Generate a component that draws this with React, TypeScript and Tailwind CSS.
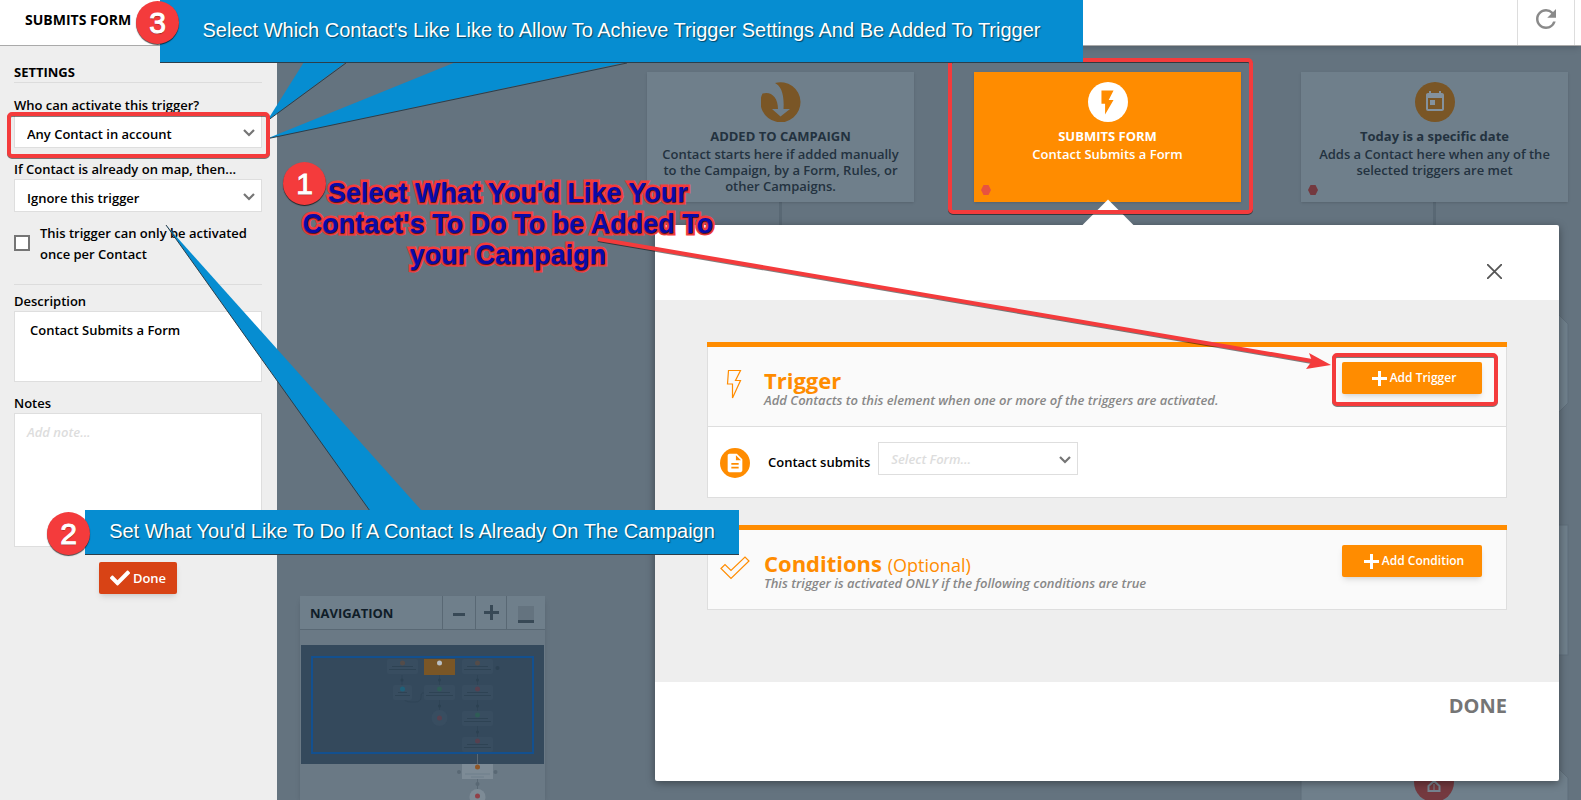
import React from "react";
import { MdRefresh, MdFlashOn, MdToday, MdDescription } from "react-icons/md";
import { FaCheck } from "react-icons/fa";

const Chevron = ({ className }: { className: string }) => (
  <svg viewBox="0 0 12 8" className={`pointer-events-none absolute h-2 w-3 ${className}`}>
    <path d="M1 1 L6 6 L11 1" fill="none" stroke="#757575" strokeWidth="2.2" />
  </svg>
);

const Plus = () => (
  <svg viewBox="0 0 15 15" className="h-[15px] w-[15px]">
    <path d="M6 0h3v6h6v3H9v6H6V9H0V6h6z" fill="#fff" />
  </svg>
);

function Sidebar() {
  return (
    <aside className="relative z-10 w-[277px] shrink-0 bg-[#eeeeee] pt-[17px] pr-[15px] pl-[14px] text-[13px] leading-[18px] font-semibold">
      <h2 className="border-b border-[#dcdcdc] pb-px font-bold">SETTINGS</h2>

      <label htmlFor="who" className="mt-[13px] mb-px block">Who can activate this trigger?</label>
      <div className="relative">
        <select id="who" className="block h-[33px] w-full appearance-none border border-[#dedede] bg-white pt-1 pl-3 font-semibold">
          <option>Any Contact in account</option>
        </select>
        <Chevron className="top-[14px] right-[7px]" />
      </div>

      <label htmlFor="already" className="mt-3 mb-px block">If Contact is already on map, then...</label>
      <div className="relative">
        <select id="already" className="block h-[33px] w-full appearance-none border border-[#dedede] bg-white pt-1 pl-3 font-semibold">
          <option>Ignore this trigger</option>
        </select>
        <Chevron className="top-[14px] right-[7px]" />
      </div>

      <div className="mt-[11px] flex items-center gap-[10px]">
        <input id="once" type="checkbox" className="mb-[2px] h-4 w-4 shrink-0 appearance-none border-2 border-[#757575] bg-white" />
        <label htmlFor="once" className="leading-[21px]">This trigger can only be activated once per Contact</label>
      </div>

      <hr className="mt-[19px] border-[#dcdcdc]" />

      <label htmlFor="description" className="mt-[7px] mb-px block">Description</label>
      <textarea
        id="description"
        defaultValue="Contact Submits a Form"
        className="block h-[71px] w-full resize-none border border-[#dedede] bg-white px-[15px] py-[9px] font-semibold"
      />

      <label htmlFor="notes" className="mt-3 mb-px block">Notes</label>
      <textarea
        id="notes"
        placeholder="Add note..."
        className="block h-[134px] w-full resize-none border border-[#dedede] bg-white px-3 py-[9px] font-semibold placeholder:text-[#dddddd] placeholder:italic"
      />

      <button className="mx-auto mt-[15px] flex h-8 w-[78px] items-center justify-center gap-[3px] rounded-xs bg-[#d84315] text-white shadow-md">
        <FaCheck className="h-5 w-5" />
        Done
      </button>
    </aside>
  );
}

function AddedIcon() {
  return (
    <svg viewBox="0 0 40 40" className="h-10 w-10">
      <path d="M14 1 A20 20 0 1 1 1.500 11.500 C10 9 17 15 17 27 H11 L19.500 34.500 L29 27 H22.500 C23.500 12 20 4 14 1 Z" fill="#7a5626" />
    </svg>
  );
}

type NodeProps = { className: string; icon: React.ReactNode; title: string; text: string };

function MapNode({ className, icon, title, text }: NodeProps) {
  return (
    <div className={`absolute top-[26px] flex h-[130px] w-[267px] flex-col items-center px-3 pt-[10px] text-center text-[13px] leading-4 shadow-sm ${className}`}>
      {icon}
      <h3 className="mt-[5px] mb-px leading-[18px] font-bold">{title}</h3>
      <p className="font-semibold">{text}</p>
    </div>
  );
}

function Canvas() {
  return (
    <>
      {/* connectors and nodes further down the map */}
      <svg className="absolute top-0 left-0 h-[754px] w-[1304px]" viewBox="277 46 1304 754">
        <g fill="#596874">
          <rect x="779" y="202" width="3" height="200" />
          <rect x="1433" y="202" width="3" height="600" />
        </g>
        <g fill="#6f7f8b" stroke="#5f6e7a">
          <path d="M1327 298H1542L1568 324V403L1542 429H1327L1301 403V324Z" />
          <rect x="1301" y="525" width="267" height="130" />
          <path d="M1327 752H1542L1568 778V882H1301V778Z" />
        </g>
        <circle cx="1434" cy="782" r="20" fill="#74393f" />
        <path d="M1430 772h8v5l-4 3-4-3zM1434 781l5.500 5v5h-11v-5z" fill="none" stroke="#76838f" strokeWidth="2" />
        <path d="M1434 784v7" stroke="#76838f" />
      </svg>

      <MapNode
        className="left-[370px] bg-[#6f7f8b] text-[#23323f]"
        icon={<AddedIcon />}
        title="ADDED TO CAMPAIGN"
        text="Contact starts here if added manually to the Campaign, by a Form, Rules, or other Campaigns."
      />
      <MapNode
        className="left-[697px] bg-[#ff8c00] text-white"
        icon={
          <span className="flex h-10 w-10 items-center justify-center rounded-full bg-white">
            <MdFlashOn className="h-[29px] w-[29px] text-[#ff8c00]" />
          </span>
        }
        title="SUBMITS FORM"
        text="Contact Submits a Form"
      />
      <MapNode
        className="left-[1024px] bg-[#6f7f8b] text-[#23323f]"
        icon={
          <span className="flex h-10 w-10 items-center justify-center rounded-full bg-[#7a5626]">
            <MdToday className="h-6 w-6 text-[#84929e]" />
          </span>
        }
        title="Today is a specific date"
        text="Adds a Contact here when any of the selected triggers are met"
      />
      <svg className="absolute top-0 left-0 h-[180px] w-[1304px]" viewBox="277 46 1304 180">
        <path d="M983.500 185h5l2.500 5-2.500 5h-5l-2.500-5z" fill="#e8533f" />
        <path d="M1310.500 185h5l2.500 5-2.500 5h-5l-2.500-5z" fill="#74393f" />
      </svg>
    </>
  );
}

const miniNodes = [
  { x: 387, y: 660, w: 31, c: "#544c49" },
  { x: 462, y: 660, w: 31, c: "#544c49" },
  { x: 393, y: 686, w: 19, c: "#1f6079" },
  { x: 424, y: 686, w: 31, c: "#2f5c56" },
  { x: 462, y: 686, w: 31, c: "#56404f" },
  { x: 462, y: 712, w: 31, c: "#2f5c56" },
  { x: 462, y: 738, w: 31, c: "#56404f" },
];

function Navigation() {
  return (
    <section className="absolute top-[550px] left-[23px] w-[245px] bg-[#6a7985] shadow-md">
      <header className="flex h-[34px] border-b border-[#596874] bg-[#6f7f8b]">
        <h2 className="flex-1 pl-[10px] text-[13px] leading-[35px] font-bold text-[#101d28]">NAVIGATION</h2>
        <button aria-label="Zoom out" className="flex w-[33px] items-center justify-center border-l border-[#596874] pt-1">
          <span className="h-[3px] w-3 bg-[#384956]" />
        </button>
        <button aria-label="Zoom in" className="flex w-[31px] items-center justify-center border-l border-[#596874]">
          <svg viewBox="0 0 15 15" className="h-[15px] w-[15px]">
            <path d="M6 0h3v6h6v3H9v6H6V9H0V6h6z" fill="#384956" />
          </svg>
        </button>
        <button aria-label="Minimize" className="flex w-[39px] items-center justify-center border-l border-[#596874] pt-1">
          <span className="h-[17px] w-4 border-b-[3px] border-[#384956] bg-[#64737f]" />
        </button>
      </header>
      <svg viewBox="300 630 245 170" className="block h-[170px] w-[245px]">
        <rect x="301" y="645" width="243" height="119" fill="#34495c" />
        <g stroke="#2f4456">
          <path d="M402 675v11M439.500 675v41M477.500 675v65" />
          <path d="M477.500 754v38" stroke="#596874" />
          <path d="M402 696q2 6 9 6h4q6 0 6-5t3-4" fill="none" />
        </g>
        {miniNodes.map((n) => (
          <g key={`${n.x}-${n.y}`}>
            <rect x={n.x} y={n.y - 1} width={n.w} height="15" rx="2" fill="#384d60" />
            <rect x={n.x + 5} y={n.y + 6} width={n.w - 10} height="1" fill="#2e4354" />
            <rect x={n.x + 2} y={n.y + 9} width={n.w - 4} height="1" fill="#2e4354" />
            <circle cx={n.x + n.w / 2} cy={n.y + 3} r="2.500" fill={n.c} />
          </g>
        ))}
        <g fill="#2c4152">
          <circle cx="402" cy="680" r="1.500" />
          <circle cx="439.500" cy="680" r="1.500" />
          <circle cx="477.500" cy="680" r="1.500" />
          <circle cx="439.500" cy="706" r="1.500" />
          <circle cx="477.500" cy="706" r="1.500" />
          <circle cx="477.500" cy="732" r="1.500" />
          <circle cx="497.500" cy="668" r="2" />
        </g>
        <circle cx="439.500" cy="718" r="8" fill="#384d60" />
        <circle cx="439.500" cy="718" r="2.500" fill="#56404f" />
        <rect x="424" y="659" width="31" height="16" fill="#7a5626" />
        <circle cx="439.500" cy="663" r="2.500" fill="#b9bfc4" />
        <rect x="312" y="657" width="221" height="96" fill="none" stroke="#13508f" strokeWidth="2" />
        <rect x="462" y="764" width="31" height="15" fill="#7d8b96" />
        <path d="M465 774h25M471 777h13" stroke="#6f7f8b" />
        <circle cx="477.500" cy="767" r="2.500" fill="#8f5626" />
        <circle cx="459" cy="772" r="2" fill="#596874" />
        <circle cx="495.500" cy="772" r="2" fill="#596874" />
        <circle cx="477.500" cy="784" r="2" fill="#596874" />
        <circle cx="477.500" cy="797" r="8" fill="#7d8b96" />
        <circle cx="477.500" cy="796" r="2.500" fill="#914048" />
      </svg>
    </section>
  );
}

function TriggerDialog() {
  return (
    <section role="dialog" aria-label="Trigger" className="absolute top-[179px] right-[22px] left-[378px] rounded-xs bg-white shadow-[0_2px_8px_rgba(0,0,0,0.4)]">
      <span className="absolute -top-[18px] left-1/2 -ml-[17px] h-9 w-9 rotate-45 bg-white" />
      <header className="relative flex h-[75px] items-center justify-end pt-[18px] pr-[57px]">
        <button aria-label="Close">
          <svg viewBox="0 0 15 15" className="h-[15px] w-[15px]">
            <path d="M0 0 L15 15 M15 0 L0 15" stroke="#555" strokeWidth="1.800" />
          </svg>
        </button>
      </header>

      <div className="relative flex h-[382px] flex-col gap-[27px] bg-[#eeeeee] px-[52px] pt-[42px]">
        <div className="border-t-[5px] border-[#ff8c00]">
          <div className="flex h-20 border border-t-0 border-[#dedede] bg-[#fafafa]">
            <svg viewBox="0 0 16 30" className="mt-[22px] ml-[18px] h-[30px] w-4">
              <path d="M2.500 1.500H14.500L9.500 11.500H14.500L6.500 29V15H1.500Z" fill="none" stroke="#ff8c00" strokeWidth="1.200" />
            </svg>
            <div className="ml-[22px] flex-1 pt-[21px]">
              <h2 className="text-[22px] leading-6 font-bold text-[#ff8c00]">Trigger</h2>
              <p className="text-[13px] leading-4 font-semibold text-[#888] italic">Add Contacts to this element when one or more of the triggers are activated.</p>
            </div>
            <button className="mt-[15px] mr-6 flex h-8 w-[140px] items-center justify-center gap-[3px] rounded-xs bg-[#ff8c00] pl-1 text-xs font-semibold text-white shadow-md">
              <Plus />
              Add Trigger
            </button>
          </div>
          <div className="flex h-[71px] items-center border border-t-0 border-[#dedede] bg-white pt-[2px] pl-3">
            <span className="flex h-[30px] w-[30px] items-center justify-center rounded-full bg-[#ff8c00]">
              <MdDescription className="h-[22px] w-[22px] text-white" />
            </span>
            <label htmlFor="form" className="ml-[18px] text-[13px] font-semibold">Contact submits</label>
            <div className="relative mb-[10px] ml-2 w-[200px]">
              <select id="form" className="block h-[33px] w-full appearance-none border border-[#dedede] bg-white pt-1 pl-3 text-[13px] font-semibold text-[#dddddd] italic">
                <option>Select Form...</option>
              </select>
              <Chevron className="top-[14px] right-[7px]" />
            </div>
          </div>
        </div>

        <div className="border-t-[5px] border-[#ff8c00]">
          <div className="flex h-20 border border-t-0 border-[#dedede] bg-[#fafafa]">
            <svg viewBox="0 0 30 24" className="mt-[26px] ml-3 h-6 w-[30px]">
              <path d="M1 12.500L5 8.500L11 14.500L25 1L29 5L11 22.500Z" fill="none" stroke="#ff8c00" strokeWidth="1.200" />
            </svg>
            <div className="ml-[14px] flex-1 pt-[21px]">
              <h2 className="text-[22px] leading-6 font-bold text-[#ff8c00]">
                Conditions <span className="text-lg leading-none font-normal">(Optional)</span>
              </h2>
              <p className="text-[13px] leading-4 font-semibold text-[#888] italic">This trigger is activated ONLY if the following conditions are true</p>
            </div>
            <button className="mt-[15px] mr-6 flex h-8 w-[140px] items-center justify-center gap-[3px] rounded-xs bg-[#ff8c00] pl-1 text-xs font-semibold text-white shadow-md">
              <Plus />
              Add Condition
            </button>
          </div>
        </div>
      </div>

      <footer className="flex h-[99px] items-start justify-end pt-[10px] pr-[52px]">
        <button className="text-[20px] leading-7 font-bold text-[#757575]">DONE</button>
      </footer>
    </section>
  );
}

const Step = ({ n, className }: { n: number; className: string }) => (
  <span className={`absolute flex h-[43px] w-[43px] items-center justify-center rounded-full bg-[#f43b3c] text-[30px] text-white shadow-[0_1px_1px_rgba(0,0,0,0.7)] [-webkit-text-stroke:1px_#fff] text-shadow-[0_1px_1px_rgba(0,0,0,0.5)] ${className}`}>
    {n}
  </span>
);

/* tutorial callouts laid over the whole screen */
function Annotations() {
  return (
    <div className="pointer-events-none absolute inset-0 z-20 font-['Liberation_Sans',sans-serif]">
      <svg className="absolute top-0 left-0 h-[800px] w-[1581px]" viewBox="0 0 1581 800">
        <g fill="#068dd1">
          <path d="M304 62H346L267 121Z" />
          <path d="M456 62H627L266 139Z" />
          <path d="M166 225L422 511H370Z" />
        </g>
        <path d="M346 63L267 121M627 63L266 139M166 225L370 511" stroke="#2c3e4a" strokeWidth="1" />
        <g fill="none" strokeWidth="4">
          <g stroke="#000" strokeOpacity="0.5">
            <rect x="9" y="115" width="259" height="42" rx="3" />
            <rect x="950" y="61" width="301" height="152" rx="3" />
            <rect x="1334" y="356" width="162" height="49" rx="3" />
            <path d="M598 240L1312 362" />
          </g>
          <g stroke="#f43b3c">
            <rect x="9" y="114" width="259" height="42" rx="3" />
            <rect x="950" y="60" width="301" height="152" rx="3" />
            <rect x="1334" y="355" width="162" height="49" rx="3" />
            <path d="M598 239L1312 361" />
          </g>
        </g>
        <path d="M1331 365L1309 353L1312 361L1306 369Z" fill="#f43b3c" />
      </svg>

      <p className="absolute top-0 left-[160px] flex h-[62px] w-[923px] items-center justify-center bg-[#068dd1] pb-[3px] text-[20px] whitespace-nowrap text-white shadow-[0_1px_0_#2c3e4a] text-shadow-[1px_1px_1px_rgba(0,0,0,0.5)]">
        Select Which Contact's Like Like to Allow To Achieve Trigger Settings And Be Added To Trigger
      </p>
      <p className="absolute top-[510px] left-[85px] flex h-11 w-[654px] items-center justify-center bg-[#068dd1] pb-[2px] text-[20px] whitespace-nowrap text-white shadow-[0_1px_0_#2c3e4a] text-shadow-[1px_1px_1px_rgba(0,0,0,0.5)]">
        Set What You'd Like To Do If A Contact Is Already On The Campaign
      </p>
      <p className="absolute top-[178px] left-[290px] w-[436px] text-center text-[27px] leading-[31px] font-bold text-[#0a0aa8] [-webkit-text-stroke:5px_#f43b3c] [paint-order:stroke_fill] text-shadow-[0_1px_1px_rgba(0,0,0,0.7)]">
        Select What You'd Like Your
        <br />
        Contact's To Do To be Added To
        <br />
        your Campaign
      </p>
      <Step n={3} className="top-[1px] left-[136px]" />
      <Step n={1} className="top-[162px] left-[283px]" />
      <Step n={2} className="top-[512px] left-[47px]" />
    </div>
  );
}

export default function App() {
  return (
    <div className="relative flex h-screen flex-col overflow-hidden bg-white font-['Open_Sans',sans-serif] text-black">
      <header className="relative z-10 flex h-[46px] shrink-0 border-b border-[#aaaaaa] bg-white pr-[6px] shadow-md">
        <h1 className="flex-1 pl-[25px] text-sm leading-10 font-bold">SUBMITS FORM</h1>
        <button aria-label="Refresh" className="flex w-[58px] justify-center border-x border-[#dddddd] pt-1">
          <MdRefresh className="h-[30px] w-[30px] text-[#8a8a8a]" />
        </button>
      </header>
      <div className="flex min-h-0 flex-1">
        <Sidebar />
        <main className="relative flex-1 overflow-hidden bg-[#64737f]">
          <Canvas />
          <Navigation />
          <TriggerDialog />
        </main>
      </div>
      <Annotations />
    </div>
  );
}
